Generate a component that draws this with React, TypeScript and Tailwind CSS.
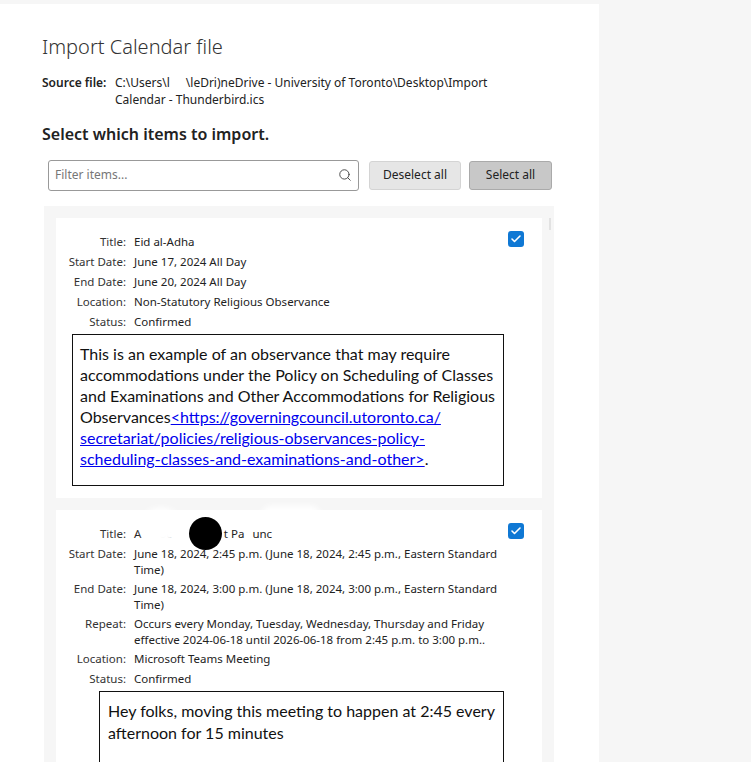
import React from 'react';
import { Check, Search } from 'lucide-react';

const segoe = "font-['Noto_Sans','Open_Sans',sans-serif]";

const Row: React.FC<{ label: string; children: React.ReactNode; tall?: boolean }> = ({ label, children, tall }) => (
  <div className={`flex ${tall ? 'pb-[3px]' : 'h-5'} items-start`}>
    <div className="w-[70px] shrink-0 text-right leading-4 text-[#333]">{label}</div>
    <div className="ml-2 whitespace-nowrap leading-4 text-[#222]">{children}</div>
  </div>
);

const CheckBox = () => (
  <div className="absolute right-[18px] top-[13px] flex h-4 w-4 items-center justify-center rounded-[3px] bg-[#0f78d4]">
    <Check className="h-3 w-3 text-white" strokeWidth={3.2} />
  </div>
);

export default function App() {
  return (
    <div className={`h-[762px] w-[751px] overflow-hidden bg-[#f6f6f6] pt-1 ${segoe}`}>
      <div className="h-full w-[599px] bg-white pl-[42px]">
        <h1 className="pt-[29px] text-[20px] font-light leading-[28px] text-[#333]">Import Calendar file</h1>

        <div className="mt-[14px] flex text-[12px] leading-[16.5px] text-[#222]">
          <span className="w-[73px] shrink-0 font-semibold">Source file:</span>
          <span className="relative whitespace-nowrap">
            C:\Users\l<span className="inline-block w-[16px]" />\leDri)neDrive - University of Toronto\Desktop\Import
            <br />
            Calendar - Thunderbird.ics
          </span>
        </div>

        <h2 className="mt-[15px] text-[16px] font-semibold leading-[22px] text-[#222]">Select which items to import.</h2>

        <div className="ml-[6px] mt-[14px] flex h-[32px] items-center">
          <div className="relative flex h-[31px] w-[311px] items-center rounded-[3px] border border-[#999] bg-white pl-[6px] text-[12px] text-[#777]">
            Filter items...
            <Search className="absolute right-[6px] top-[7px] h-[14px] w-[14px] text-[#444]" strokeWidth={1.6} />
          </div>
          <button className="ml-[10px] h-[29px] w-[92px] rounded-[3px] border border-[#d4d4d4] bg-[#e6e6e6] text-[12px] text-[#222]">
            Deselect all
          </button>
          <button className="ml-2 h-[29px] w-[83px] rounded-[3px] border border-[#aaa] bg-[#c8c8c8] text-[12px] text-[#222]">
            Select all
          </button>
        </div>

        <div className="relative ml-[2px] mt-[15px] h-[600px] w-[510px] bg-[#f6f6f6] pl-3 pt-3 text-[11.5px]">
          <div className="absolute left-[505px] top-3 h-3 w-[2px] bg-[#e2e2e2]" />

          <div className="relative h-[280px] w-[486px] bg-white pt-[16px]">
            <CheckBox />
            <Row label="Title:">Eid al-Adha</Row>
            <Row label="Start Date:">June 17, 2024 All Day</Row>
            <Row label="End Date:">June 20, 2024 All Day</Row>
            <Row label="Location:">Non-Statutory Religious Observance</Row>
            <Row label="Status:">Confirmed</Row>
            <div className="ml-4 h-[152px] w-[432px] whitespace-nowrap border border-[#111] pl-[7px] pt-2 font-['Lato',sans-serif] text-[16px] leading-[21px] text-[#111]">
              This is an example of an observance that may require
              <br />
              accommodations under the Policy on Scheduling of Classes
              <br />
              and Examinations and Other Accommodations for Religious
              <br />
              Observances
              <a className="text-[#0000ee] underline" href="#policy">
                &lt;https://governingcouncil.utoronto.ca/
                <br />
                secretariat/policies/religious-observances-policy-
                <br />
                scheduling-classes-and-examinations-and-other&gt;
              </a>
              .
            </div>
          </div>

          <div className="relative mt-3 h-[300px] w-[486px] bg-white pt-[16px]">
            <CheckBox />
            <Row label="Title:">
              <span className="text-[#222]">
                A<span className="inline-block w-[18px]" />oc<span className="inline-block w-[52px]" />t Pa<span className="inline-block w-[8px]" />unc
              </span>
            </Row>
            <Row label="Start Date:" tall>
              June 18, 2024, 2:45 p.m. (June 18, 2024, 2:45 p.m., Eastern Standard
              <br />
              Time)
            </Row>
            <Row label="End Date:" tall>
              June 18, 2024, 3:00 p.m. (June 18, 2024, 3:00 p.m., Eastern Standard
              <br />
              Time)
            </Row>
            <Row label="Repeat:" tall>
              Occurs every Monday, Tuesday, Wednesday, Thursday and Friday
              <br />
              effective 2024-06-18 until 2026-06-18 from 2:45 p.m. to 3:00 p.m..
            </Row>
            <Row label="Location:">Microsoft Teams Meeting</Row>
            <Row label="Status:">Confirmed</Row>
            <div className="ml-[43px] h-[120px] w-[405px] whitespace-nowrap border border-[#111] pl-2 pt-2 font-['Lato',sans-serif] text-[16px] leading-[21.5px] text-[#111]">
              Hey folks, moving this meeting to happen at 2:45 every
              <br />
              afternoon for 15 minutes
            </div>
            {/* redaction smudges and the black dot lie over the title */}
            <div className="absolute left-[85px] top-[-2px] h-[36px] w-[40px] rounded-full bg-white blur-[3px]" />
            <div className="absolute left-[205px] top-[-4px] h-[22px] w-[60px] rounded-full bg-white blur-[3px]" />
            <div className="absolute left-[133px] top-[7px] h-[33px] w-[33px] rounded-full bg-black blur-[0.6px]" />
          </div>
        </div>
      </div>
    </div>
  );
}
